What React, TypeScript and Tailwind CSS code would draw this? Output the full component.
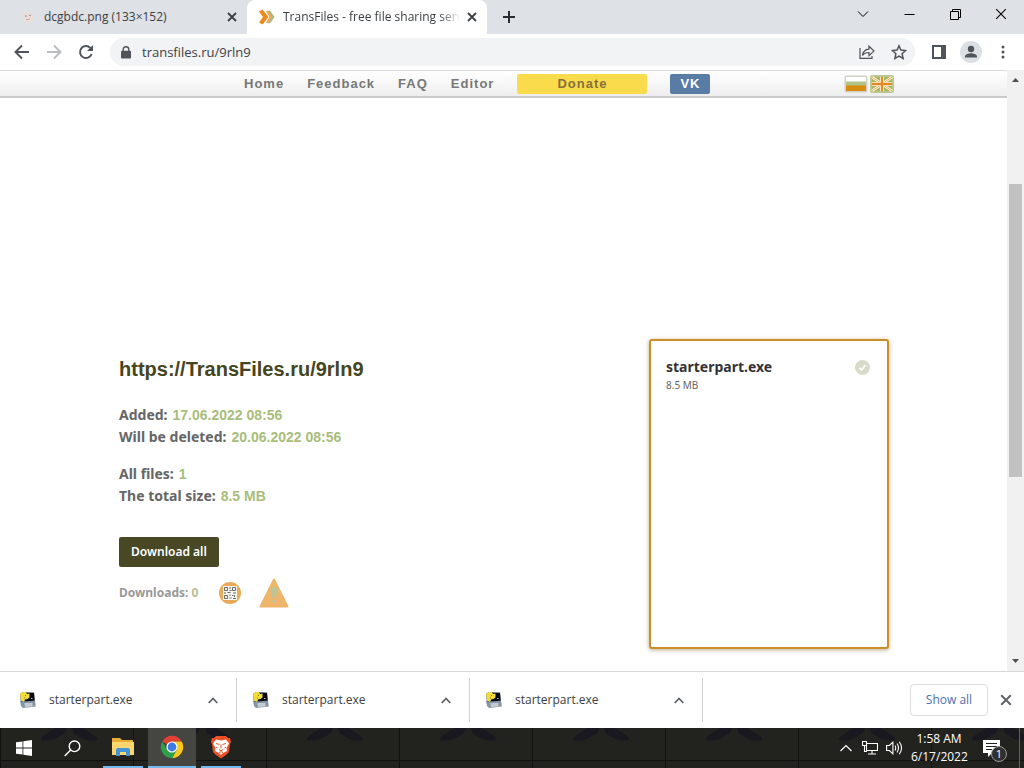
import type { ReactNode } from 'react';

const ui = "font-['Open_Sans','Noto_Sans',sans-serif]";
const noto = "font-['Noto_Sans','Open_Sans',sans-serif]";
const arial = "font-['Liberation_Sans',Arial,sans-serif]";

function CloseIcon({ size = 10, width = 1.8 }: { size?: number; width?: number }) {
  return (
    <svg width={size} height={size} viewBox="0 0 10 10" fill="none" stroke="currentColor" strokeWidth={width}>
      <path d="M1 1l8 8M9 1l-8 8" />
    </svg>
  );
}

function TransFilesIcon() {
  return (
    <svg width="16" height="16" viewBox="0 0 16 16">
      <path d="M8.500 2.500L11 1.500 15.500 8 11 14.500l-2.500-1L12 8z" fill="#a3bd86" />
      <path d="M7 2.500L9 1.500 13 8l-4 6.500-2-1L10.500 8z" fill="#eca458" />
      <path d="M0 2.500L3.500.5 9.500 8l-6 7.500L0 13.500 4 8z" fill="#ea8a1a" />
    </svg>
  );
}

function FaceIcon() {
  return (
    <svg width="16" height="16" viewBox="0 0 16 16">
      <circle cx="8" cy="8" r="5.500" fill="#eadedb" />
      <circle cx="5.800" cy="7" r=".8" fill="#8f8582" />
      <circle cx="10" cy="6.500" r=".8" fill="#8f8582" />
      <path d="M6 10.300q2 1 4-.5" stroke="#d0a8a0" fill="none" />
    </svg>
  );
}

function TabStrip() {
  return (
    <header className="flex h-[34px] shrink-0 items-stretch bg-[#dee1e6] text-[#3c4043]">
      <div className="flex w-[247px] items-center pl-5 pr-2 text-xs">
        <FaceIcon />
        <span className="ml-2 flex-1 whitespace-nowrap">dcgbdc.png (133×152)</span>
        <button aria-label="Close dcgbdc.png" className="p-[2px]"><CloseIcon /></button>
      </div>
      <div className="flex w-60 items-center rounded-t-lg bg-white pl-3 pr-2 text-xs">
        <TransFilesIcon />
        <span className="ml-2 flex-1 overflow-hidden whitespace-nowrap [mask-image:linear-gradient(to_right,black_88%,transparent)]">
          TransFiles - free file sharing servi
        </span>
        <button aria-label="Close TransFiles" className="ml-1 p-[2px]"><CloseIcon /></button>
      </div>
      <button aria-label="New tab" className="px-4">
        <svg width="12" height="12" viewBox="0 0 12 12" stroke="#2b2e31" strokeWidth="2"><path d="M6 0v12M0 6h12" /></svg>
      </button>
      <div className="ml-auto flex items-center pb-[6px] text-black">
        <button aria-label="Search tabs" className="grid w-[46px] place-items-center">
          <svg width="12" height="7" viewBox="0 0 12 7" fill="none" stroke="currentColor"><path d="M1 .5l5 5 5-5" /></svg>
        </button>
        <button aria-label="Minimize" className="grid w-[46px] place-items-center">
          <svg width="11" height="11" viewBox="0 0 11 11" stroke="currentColor"><path d="M.5 5.500h10" /></svg>
        </button>
        <button aria-label="Restore" className="grid w-[46px] place-items-center">
          <svg width="11" height="11" viewBox="0 0 11 11" fill="none" stroke="currentColor"><path d="M.5 2.500h8v8h-8zM2.500 2.500v-2h8v8h-2" /></svg>
        </button>
        <button aria-label="Close window" className="grid w-[46px] place-items-center"><CloseIcon size={12} width={0.9} /></button>
      </div>
    </header>
  );
}

function Toolbar() {
  return (
    <div className="flex h-9 shrink-0 items-center bg-white pl-[14px] pr-[14px] text-[#50545a]">
      <button aria-label="Back" className="mr-4">
        <svg width="16" height="16" viewBox="0 0 16 16" fill="none" stroke="currentColor" strokeWidth="1.900"><path d="M15 8H2M8 1.500L1.500 8 8 14.500" /></svg>
      </button>
      <button aria-label="Forward" className="mr-4 text-[#b9bbbe]">
        <svg width="16" height="16" viewBox="0 0 16 16" fill="none" stroke="currentColor" strokeWidth="1.900"><path d="M1 8h13M8 1.500L14.500 8 8 14.500" /></svg>
      </button>
      <button aria-label="Reload" className="mr-4">
        <svg width="16" height="16" viewBox="0 0 16 16" fill="none" stroke="currentColor" strokeWidth="1.900">
          <path d="M13.600 10.200A6 6 0 1 1 12.300 3.800L14 5.500" />
          <path d="M15 1v6H9z" fill="currentColor" stroke="none" />
        </svg>
      </button>
      <div className="flex h-7 flex-1 items-center rounded-full bg-[#f1f3f4] pl-[11px] pr-2">
        <svg width="10" height="13" viewBox="0 0 10 13"><path d="M2.200 5.500V3.500a2.800 2.800 0 0 1 5.600 0v2" fill="none" stroke="currentColor" strokeWidth="1.400" /><rect y="4.800" width="10" height="7.700" rx="1" fill="currentColor" /></svg>
        <input aria-label="Address" defaultValue="transfiles.ru/9rln9" className="ml-[11px] min-w-0 flex-1 bg-transparent text-[13px] leading-5 text-[#3f4246] outline-none" />
        <button aria-label="Share" className="mr-4">
          <svg width="16" height="16" viewBox="0 0 16 16" fill="none" stroke="currentColor" strokeWidth="1.200">
            <path d="M1 4v10.400h12V12" /><path d="M3.500 11.500c.5-4 2.500-6 6.500-6.300V2.200l5 4.800-5 4.600V8.500c-3 0-5 .8-6.500 3z" />
          </svg>
        </button>
        <button aria-label="Bookmark">
          <svg width="16" height="16" viewBox="0 0 16 16" fill="none" stroke="currentColor" strokeWidth="1.500"><path d="M8 1.800l1.900 4.300 4.700.5-3.500 3.100 1 4.700L8 12l-4.100 2.400 1-4.700-3.500-3.100 4.700-.5z" /></svg>
        </button>
      </div>
      <button aria-label="Side panel" className="ml-[17px]">
        <svg width="14" height="14" viewBox="0 0 14 14"><rect x="1" y="1" width="12" height="12" fill="none" stroke="currentColor" strokeWidth="2" /><path d="M9 1h4v12H9z" fill="currentColor" /></svg>
      </button>
      <button aria-label="Profile" className="ml-[14px]">
        <svg width="22" height="22" viewBox="0 0 22 22"><circle cx="11" cy="11" r="11" fill="#dcdfe3" /><circle cx="11" cy="8" r="3.200" fill="currentColor" /><path d="M5 16.500v-1.200c0-2 4-3.100 6-3.100s6 1.100 6 3.100v1.200z" fill="currentColor" /></svg>
      </button>
      <button aria-label="Menu" className="ml-[14px] px-[5px]">
        <svg width="4" height="14" viewBox="0 0 4 14" fill="currentColor"><circle cx="2" cy="2" r="1.500" /><circle cx="2" cy="7" r="1.500" /><circle cx="2" cy="12" r="1.500" /></svg>
      </button>
    </div>
  );
}

function RussianFlag() {
  return (
    <svg width="24" height="18" viewBox="0 0 24 18">
      <rect x=".5" y=".5" width="23" height="17" rx="2" fill="#d2d1c8" />
      <path d="M2 2h20v5H2z" fill="#fff" /><path d="M2 6.500h20V11H2z" fill="#b3c287" /><path d="M2 10.500h20V16H2z" fill="#d88c10" />
    </svg>
  );
}

function BritishFlag() {
  return (
    <svg width="24" height="18" viewBox="0 0 24 18">
      <rect width="24" height="18" rx="2" fill="#bcc78e" /><path d="M2 2h20v14H2z" fill="#a8b66a" />
      <path d="M2 2l20 14M22 2L2 16" stroke="#fff7df" strokeWidth="2.600" />
      <path d="M2 2l20 14M22 2L2 16" stroke="#e09a45" strokeWidth=".8" />
      <path d="M12 2v14M2 9h20" stroke="#fff7df" strokeWidth="4" />
      <path d="M12 2v14M2 9h20" stroke="#e18a24" strokeWidth="2.300" />
    </svg>
  );
}

function SiteNav() {
  return (
    <nav className={`${arial} flex h-7 shrink-0 items-center border-b-2 border-t border-b-[#cacaca] border-t-[#d9d9d9] bg-gradient-to-b from-white to-[#eeeeee] pl-[244px] pr-[113px] text-[13px] font-bold tracking-[1px] text-[#777]`}>
      <div className="flex items-center gap-[23px]">
        <a href="#home">Home</a>
        <a href="#feedback">Feedback</a>
        <a href="#faq">FAQ</a>
        <a href="#editor">Editor</a>
        <a href="#donate" className="w-[130px] rounded-xs bg-[#fadb4b] text-center leading-5 text-[#85703a]">Donate</a>
        <a href="#vk" className="w-10 rounded-xs bg-[#587ca3] text-center leading-5 text-white">VK</a>
      </div>
      <div className="ml-auto flex gap-[2px]">
        <a href="#ru" aria-label="Russian"><RussianFlag /></a>
        <a href="#en" aria-label="English"><BritishFlag /></a>
      </div>
    </nav>
  );
}

function QrIcon() {
  return (
    <svg width="22" height="22" viewBox="0 0 22 22">
      <circle cx="11" cy="11" r="11" fill="#ebaa58" /><path d="M4 4h14v14H4z" fill="#f6f5ee" />
      <path d="M5.500 5.500h3v3h-3zM13.500 5.500h3v3h-3zM5.500 13.500h3v3h-3z" fill="none" stroke="#646d68" />
      <path d="M11 5v2M10.500 8.500h2M5 11h2M8.500 10.500h3M14 11h3M11 12.500v1.500M13 13.500h1.500M15.500 13v2M10.500 16h2M14 16.500h3" stroke="#646d68" fill="none" />
    </svg>
  );
}

function WarningIcon() {
  return (
    <svg width="30" height="30" viewBox="0 0 30 30">
      <path d="M15 1.500L28.500 28.500h-27z" fill="#efb56b" stroke="#efb56b" strokeWidth="2" strokeLinejoin="round" />
      <path d="M15 9q4 0 3 5l-1.500 6h-3L12 14q-1-5 3-5z" fill="#b9c59a" /><circle cx="15" cy="23" r="1.800" fill="#b9c59a" />
    </svg>
  );
}

function Info({ label, children }: { label: string; children: ReactNode }) {
  return (
    <div className="flex gap-[5px]">
      <dt className="text-[#666]">{label}</dt>
      <dd className={`${arial} text-[#a9bd7b]`}>{children}</dd>
    </div>
  );
}

function FilePage() {
  return (
    <div className={`${noto} flex min-w-0 flex-1 flex-col bg-white`}>
      <SiteNav />
      <main className="flex flex-1 items-end justify-between pb-[22px] pl-[119px] pr-[118px]">
        <section className="pb-10">
          <h1 className={`${arial} text-xl leading-6 font-bold text-[#454522]`}>https://TransFiles.ru/9rln9</h1>
          <dl className="mt-[23px] text-sm leading-[22px] font-bold">
            <Info label="Added:">17.06.2022 08:56</Info>
            <Info label="Will be deleted:">20.06.2022 08:56</Info>
          </dl>
          <dl className="mt-[15px] text-sm leading-[22px] font-bold">
            <Info label="All files:">1</Info>
            <Info label="The total size:">8.5 MB</Info>
          </dl>
          <button className="mt-[30px] block h-[30px] w-[100px] rounded-xs bg-[#484824] text-xs font-semibold text-white">Download all</button>
          <div className="mt-[10px] flex h-8 items-center">
            <span className="w-[100px] text-xs font-bold text-[#999]">Downloads: <span className="text-[#b7bd96]">0</span></span>
            <button aria-label="QR code"><QrIcon /></button>
            <button aria-label="Report" className="ml-[18px]"><WarningIcon /></button>
          </div>
        </section>
        <section className="h-[310px] w-60 rounded-[3px] border-2 border-[#cb8f26] bg-white px-[15px] pt-4 shadow-[0_1px_4px_rgba(120,90,30,0.5)]">
          <div className="flex items-center justify-between">
            <h2 className="text-sm leading-5 font-bold text-[#333]">starterpart.exe</h2>
            <button aria-label="Select starterpart.exe" className="mr-[2px]">
              <svg width="15" height="15" viewBox="0 0 15 15"><circle cx="7.500" cy="7.500" r="7.500" fill="#d9dbc8" /><path d="M4.500 8l2 2L10.500 5" fill="none" stroke="#fff" strokeWidth="1.800" /></svg>
            </button>
          </div>
          <p className="text-[10px] leading-4 text-[#666]">8.5 MB</p>
        </section>
      </main>
    </div>
  );
}

function Scrollbar() {
  return (
    <div className="flex w-[17px] shrink-0 flex-col items-center bg-[#f1f1f1] py-2 text-[#505050]">
      <svg width="7" height="4" viewBox="0 0 7 4" fill="currentColor"><path d="M0 4l3.500-4L7 4z" /></svg>
      <div className="flex w-full flex-1 flex-col pl-[2px] pr-[2px]">
        <div className="grow-[102]" />
        <div className="grow-[292] bg-[#c1c1c1]" />
        <div className="grow-[182]" />
      </div>
      <svg width="7" height="4" viewBox="0 0 7 4" fill="currentColor"><path d="M0 0l3.500 4L7 0z" /></svg>
    </div>
  );
}

function ExeIcon() {
  return (
    <svg width="18" height="18" viewBox="0 0 18 18">
      <path d="M1 3l3-2 11 .5L16 10 2 12z" fill="#3d5368" />
      <path d="M6 2h9l.5 8H6z" fill="#07090d" />
      <path d="M1 10l3 1 12-1.500.8 6L4 17l-2-2z" fill="#8496a6" />
      <path d="M5.500 12h8v3.500l-7.500.5z" fill="#c3ccd4" />
      <path d="M1 3l3-2h3l1 2 2.500-.5v4L8.500 8 6 8.500 5 11 2 9.500z" fill="#f2dc3b" />
      <path d="M6 4.500h1M5 7h1" stroke="#8a7a24" /><path d="M12 7.500h1.500" stroke="#a9bdd0" />
    </svg>
  );
}

function Chevron() {
  return <svg width="10" height="7" viewBox="0 0 10 7" fill="none" stroke="#5f6368" strokeWidth="1.800"><path d="M.7 6L5 1.500 9.300 6" /></svg>;
}

function DownloadShelf() {
  return (
    <footer className="flex h-[57px] shrink-0 items-center border-t border-[#d5d7da] bg-white pl-1 pr-3">
      {[1, 2, 3].map((n) => (
        <div key={n} className="flex h-11 w-[233px] items-center border-r border-[#cfd1d4] pl-[15px] pr-[18px]">
          <ExeIcon />
          <span className="ml-3 flex-1 text-xs text-[#3c4043]">starterpart.exe</span>
          <button aria-label={`Options for download ${n}`}><Chevron /></button>
        </div>
      ))}
      <button className="ml-auto h-8 w-[78px] rounded border border-[#dadce0] text-xs font-medium text-[#4d70b5]">Show all</button>
      <button aria-label="Close downloads" className="ml-3 text-[#5f6368]"><CloseIcon size={12} width={1.6} /></button>
    </footer>
  );
}

function WallpaperPattern() {
  return (
    <svg className="absolute inset-0 -z-10 h-full w-full" aria-hidden="true">
      <defs>
        <pattern id="wallpaper" width="133" height="40" patternUnits="userSpaceOnUse">
          <path d="M41 12Q40 9 46 6L55 0H67Q67 5 60 8Q52 14 41 12zM97 12Q98 9 92 6L83 0H72Q72 5 78 8Q86 14 97 12z" fill="#191820" />
          <path d="M.5 0v40M0 32.500h133" stroke="#111110" />
        </pattern>
      </defs>
      <rect width="100%" height="100%" fill="url(#wallpaper)" />
    </svg>
  );
}

function FolderIcon() {
  return (
    <svg width="22" height="20" viewBox="0 0 22 20"><path d="M0 1h8l2 2h11v15H0z" fill="#e9ad35" /><path d="M0 5h22v13H0z" fill="#fbd66e" /><path d="M4 19v-6q0-2 2-2h10q2 0 2 2v6h-4v-4H8v4z" fill="#4594d5" /></svg>
  );
}

function ChromeIcon() {
  return (
    <svg width="24" height="24" viewBox="0 0 24 24">
      <path d="M12 12L2.300 6.400A11.200 11.200 0 0 1 21.700 6.400H12z" fill="#e34133" />
      <path d="M12 6.400h9.700A11.200 11.200 0 0 1 12 23.200L16.800 14.800z" fill="#fbc81e" />
      <path d="M12 12l4.800 2.800L12 23.200A11.200 11.200 0 0 1 2.300 6.400l4.900 8.400z" fill="#2ca14a" />
      <circle cx="12" cy="12" r="5.600" fill="#fff" /><circle cx="12" cy="12" r="4.400" fill="#3c7be4" />
    </svg>
  );
}

function BraveIcon() {
  return (
    <svg width="22" height="24" viewBox="0 0 22 24">
      <path d="M6 1h10l2 2h2l1 4-1 2-1 8-3 3-5 3.500L6 20l-3-3L2 9 1 7l1-4h2z" fill="#ed5025" />
      <path d="M6 4.500l5 1 5-1 3 4-2.500 4.500.5 3-4 2-2 2-2-2-4-2 .5-3L3 8.500z" fill="#fff" />
      <path d="M6 8.500l3.500 1M16 8.500l-3.500 1M11 9.500v4M9 14.500l2 1.200 2-1.200M9 17.500l2-.8 2 .8M6 12l1.500 1M16 12l-1.500 1" fill="none" stroke="#ed5025" />
    </svg>
  );
}

function TaskButton({ label, line, active, children }: { label: string; line: string; active?: boolean; children: ReactNode }) {
  return (
    <button aria-label={label} className={`flex h-full flex-col items-center ${active ? 'bg-[#454542]' : ''}`}>
      <span className="grid flex-1 place-items-center">{children}</span>
      <span className={`h-[2px] bg-[#76b9ed] ${line}`} />
    </button>
  );
}

function Taskbar() {
  return (
    <footer className="relative isolate flex h-10 shrink-0 items-center bg-[#22221f] text-white">
      <WallpaperPattern />
      <button aria-label="Start" className="grid h-full w-12 place-items-center">
        <svg width="16" height="16" viewBox="0 0 16 16" fill="#fff"><path d="M0 2.300l6.500-.9v6.100H0zM7.300 1.300L16 0v7.500H7.300zM0 8.400h6.500v6.200L0 13.700zM7.300 8.400H16V16l-8.700-1.300z" /></svg>
      </button>
      <button aria-label="Search" className="mr-[7px] grid h-full w-12 place-items-center">
        <svg width="17" height="17" viewBox="0 0 17 17" fill="none" stroke="#fff" strokeWidth="1.400"><circle cx="10.500" cy="6.300" r="5.300" /><path d="M6.700 10L.7 16" /></svg>
      </button>
      <div className="flex h-full gap-[5px]">
        <TaskButton label="File Explorer" line="w-10"><FolderIcon /></TaskButton>
        <TaskButton label="Chrome" line="w-12" active><ChromeIcon /></TaskButton>
        <TaskButton label="Brave" line="w-10"><BraveIcon /></TaskButton>
      </div>
      <div className="ml-auto flex items-center">
        <button aria-label="Hidden icons" className="mr-[10px]">
          <svg width="12" height="8" viewBox="0 0 12 8" fill="none" stroke="#fff" strokeWidth="1.200"><path d="M.5 7L6 1.500 11.500 7" /></svg>
        </button>
        <button aria-label="Network" className="mr-2">
          <svg width="16" height="14" viewBox="0 0 16 14" fill="none" stroke="#fff" strokeWidth="1.100"><path d="M4.500 2.500h11v7h-11zM10 9.500v3M6 13h8M.5.5h4v4h-4zM2.500 4.500v6H5" /></svg>
        </button>
        <button aria-label="Volume" className="mr-2">
          <svg width="17" height="14" viewBox="0 0 17 14" fill="none" stroke="#fff" strokeWidth="1.100"><path d="M.6 4.500h2.800l3.500-3.300v11.600L3.400 9.500H.6zM9 4.500q1.500 2.500 0 5M11 2.500q3 4.500 0 9M13.300.8q4.500 6.200 0 12.400" /></svg>
        </button>
        <time className="w-[56px] text-center text-xs leading-[18px] whitespace-nowrap">
          <span className="block">1:58 AM</span>
          <span className="block">6/17/2022</span>
        </time>
        <button aria-label="Notifications, 1 new" className="relative ml-4 mr-[19px]">
          <svg width="17" height="17" viewBox="0 0 17 17"><path d="M0 0h17v13H9l-4 4v-4H0z" fill="#fff" /><path d="M3 3.500h11M3 6.500h11M3 9.500h6" stroke="#22221f" /></svg>
          <span className="absolute left-2 top-[6px] grid size-4 place-items-center rounded-full border border-[#999] bg-[#303030] text-[11px] leading-none">1</span>
        </button>
      </div>
      <div className="mr-1 h-full w-px bg-[#62625f]" />
    </footer>
  );
}

export default function App() {
  return (
    <div className={`${ui} flex h-screen min-h-[560px] flex-col overflow-hidden bg-white`}>
      <TabStrip />
      <Toolbar />
      <div className="flex min-h-0 flex-1">
        <FilePage />
        <Scrollbar />
      </div>
      <DownloadShelf />
      <Taskbar />
    </div>
  );
}
